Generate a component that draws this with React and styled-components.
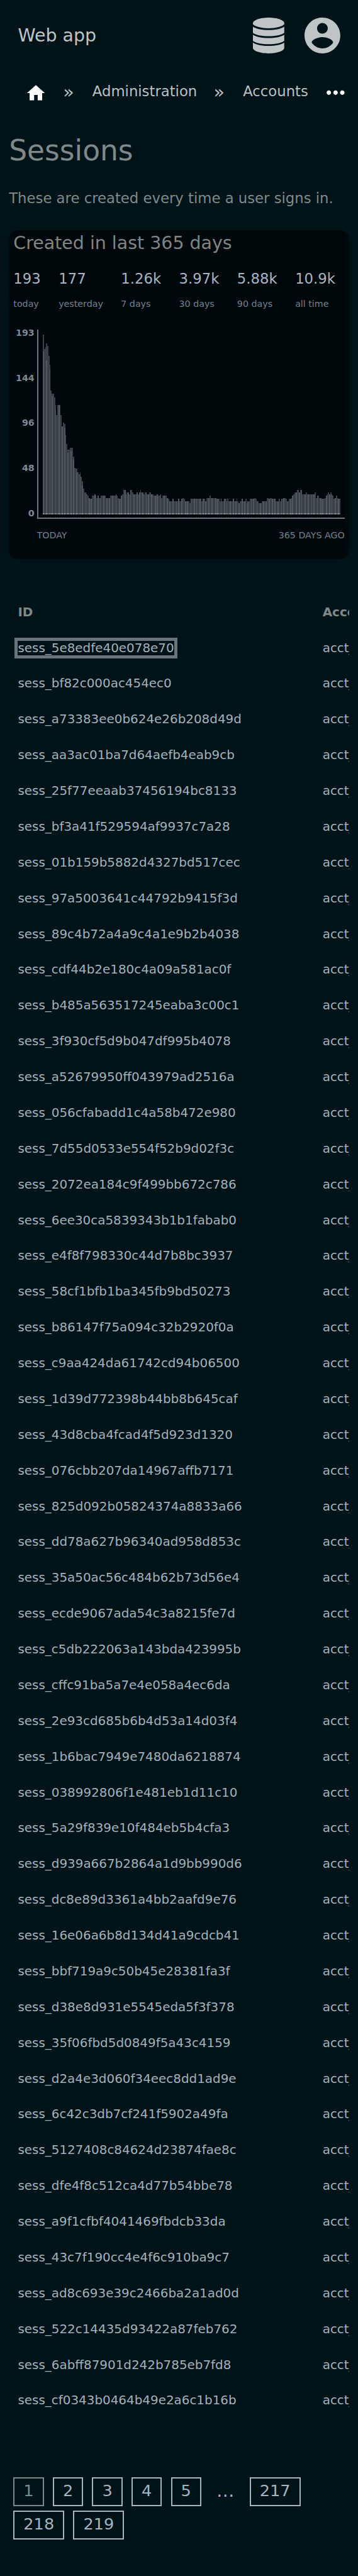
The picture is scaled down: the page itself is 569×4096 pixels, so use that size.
import React from "react";
import styled, { createGlobalStyle } from "styled-components";
import { MdHome, MdMoreHoriz } from "react-icons/md";

/* 1rem = one tenth of the 64rem-wide page */
const GlobalStyle = createGlobalStyle`
  html { font-size: calc(4096px / 460.8); background: #001318; }
  body {
    margin: 0;
    background: #001318;
    color: #bec3c4;
    font-family: "DejaVu Sans", Verdana, sans-serif;
    overflow: hidden;
  }
  *, *::before, *::after { box-sizing: border-box; }
`;

const Page = styled.div`
  display: flex;
  flex-direction: column;
  width: 100%;
  height: 460.8rem;
  overflow: hidden;
`;

const Header = styled.header`
  display: flex;
  align-items: center;
  height: 12.8rem;
  padding: 0 3.2rem;
`;

const Brand = styled.a`
  flex: 1;
  font-size: 3.2rem;
  line-height: 3.8rem;
`;

const HeaderIcon = styled.svg`
  display: block;
  width: ${(p) => p.$width};
  height: 6.4rem;
  margin-left: 3.6rem;
  fill: #bfc5c6;
`;

const Breadcrumbs = styled.nav`
  display: flex;
  align-items: center;
  height: 7.6rem;
  padding-left: 4.48rem;
  color: #fff;
`;

const HomeIcon = styled(MdHome)`
  flex: none;
  width: 3.84rem;
  height: 3.84rem;
  margin-top: 0.2rem;
`;

const MoreIcon = styled(MdMoreHoriz)`
  flex: none;
  width: 4.8rem;
  height: 4.8rem;
  margin-left: 2.5rem;
`;

const Separator = styled.span`
  width: 2rem;
  margin: 0 3.25rem 0 2.95rem;
  padding-bottom: 0.2rem;
  color: #bbbfc0;
  font-size: 3.2rem;
  line-height: 3.8rem;
`;

const Crumb = styled.a`
  padding-bottom: 0.5rem;
  color: #bbbfc0;
  font-size: 2.56rem;
  line-height: 3rem;
`;

const Title = styled.h1`
  margin: 3.6rem 1.6rem 0;
  color: #7f898b;
  font-size: 5.12rem;
  font-weight: 400;
  line-height: 6rem;
`;

const Description = styled.p`
  margin: 4rem 1.6rem 0;
  color: #7f898b;
  font-size: 2.56rem;
  line-height: 3rem;
  white-space: nowrap;
`;

const Card = styled.section`
  height: 58.8rem;
  margin: 4.2rem 1.6rem 0;
  padding: 0.4rem 0.8rem 0;
  border-radius: 1.6rem;
  background: #00080b;
`;

const CardTitle = styled.h2`
  margin: 0;
  color: #7f8485;
  font-size: 3.2rem;
  font-weight: 400;
  line-height: 3.8rem;
`;

const Stats = styled.div`
  display: flex;
  gap: 3.2rem;
  margin-top: 2.95rem;
`;

const Stat = styled.div`
  display: flex;
  flex-direction: column;
  gap: 2.1rem;
`;

const StatValue = styled.span`
  color: #a7b4c1;
  font-size: 2.56rem;
  line-height: 3rem;
`;

const StatLabel = styled.span`
  color: #73808c;
  font-size: 1.6rem;
  line-height: 2rem;
`;

const Chart = styled.div`
  display: flex;
  margin-top: 3.15rem;
`;

const YAxis = styled.div`
  display: flex;
  flex-direction: column;
  justify-content: space-between;
  width: 3.76rem;
  height: 34.3rem;
  color: #7c8995;
  font-size: 1.6rem;
  font-weight: 700;
  line-height: 2rem;
  text-align: right;
`;

const Plot = styled.div`
  width: 55rem;
  height: 33.8rem;
  margin: 0.4rem 0 0 0.44rem;
  padding: 0.8rem 0.8rem 0 0.8rem;
  border: solid #6b7480;
  border-width: 0 0 2px 2px;
`;

const Bars = styled.svg`
  display: block;
  width: 53.2rem;
  height: 32.2rem;
`;

const XAxis = styled.div`
  display: flex;
  justify-content: space-between;
  margin: 1.95rem 0 0 4.2rem;
  color: #73808c;
  font-size: 1.6rem;
  line-height: 2rem;
`;

const Table = styled.div`
  margin: 6.4rem 1.6rem 0;
  overflow: hidden;
`;

const Row = styled.div`
  display: grid;
  grid-template-columns: 54.48rem 20rem;
  align-items: center;
  height: 6.4rem;
  padding-left: 1.6rem;
  color: ${(p) => (p.$head ? "#7f898b" : "#a3b0ba")};
  font-size: 2.24rem;
  font-weight: ${(p) => (p.$head ? 700 : 400)};
  line-height: 2.8rem;
  white-space: nowrap;
`;

const SessionLink = styled.a`
  outline: ${(p) => (p.$focused ? "0.62rem solid #6b737c" : "none")};
`;

const Pagination = styled.nav`
  display: flex;
  flex-wrap: wrap;
  gap: 0.8rem 1.6rem;
  margin: 10.4rem 2.4rem 0;
  width: 56rem;
`;

const PageButton = styled.a`
  display: flex;
  align-items: center;
  justify-content: center;
  width: ${(p) => (p.$wide ? "9.1rem" : "5.44rem")};
  height: 5.2rem;
  padding-bottom: 0.4rem;
  border: ${(p) => (p.$plain ? "0" : "2px solid currentColor")};
  color: ${(p) => (p.$current ? "#7f898b" : "#a7b4bf")};
  font-size: ${(p) => (p.$plain ? "3.2rem" : "2.88rem")};
`;

const stats = [
  ["193", "today"],
  ["177", "yesterday"],
  ["1.26k", "7 days"],
  ["3.97k", "30 days"],
  ["5.88k", "90 days"],
  ["10.9k", "all time"],
];

/* column tops of the chart, "height" or "heightxcount" */
const columns = (
  "161 148 150 153 151 142 134 111 108x2 105 98 89 98x3 89 79 82 81 71 63 58x2 60x3 52 42 41x2 38 36 38 34 30 23 " +
  "20x2 18 17 15 14x2 17x2 18 17 15 17 15x2 17x4 15x4 17x5 18 17 15 14x2 17 18 22x2 18 20x2 18 22x2 20 18x3 20 18 " +
  "20 22 20x2 18 20x2 18x2 20x2 18x2 17x3 18 17x2 18 15 17x4 15 14 12x3 14 12x4 14 12x2 14 15 14 12x4 10 14x10 12 " +
  "14x2 12 15x3 17 15x5 14x3 12 14 12x2 14x2 12 14 12x4 14 12x2 14 12 10 12x2 14 12x2 14 10 12x2 14x4 15 14 12x2 " +
  "10x3 12x4 15x2 14 15x2 14x3 12x3 14 12 14x2 15x2 14 12x2 14x2 15 17 18 20x2 22x2 20 22x2 18x3 20 18x7 20 15 " +
  "17x2 15x2 14x3 15 17 18 20 18 20 18 17 14 15 17 15 14x2"
)
  .split(" ")
  .flatMap((entry) => {
    const [height, count = 1] = entry.split("x").map(Number);
    return Array(count).fill(height);
  });

/* overlap heights where two neighbouring days differ inside one column */
const overlaps = { 0: 146, 3: 138, 6: 130, 8: 106, 11: 94, 16: 87, 19: 78, 22: 55, 25: 57, 27: 49, 30: 38, 33: 36, 35: 26 };

const DAYS = 365;
const WIDTH = 266;
const daysPerColumn = Array(WIDTH).fill(0);
for (let day = 0; day < DAYS; day++) {
  daysPerColumn[Math.min(WIDTH - 1, Math.floor((day * WIDTH) / DAYS + 0.24))]++;
}

const sessions = `5e8edfe40e078e70 bf82c000ac454ec0 a73383ee0b624e26b208d49d aa3ac01ba7d64aefb4eab9cb
25f77eeaab37456194bc8133 bf3a41f529594af9937c7a28 01b159b5882d4327bd517cec 97a5003641c44792b9415f3d
89c4b72a4a9c4a1e9b2b4038 cdf44b2e180c4a09a581ac0f b485a563517245eaba3c00c1 3f930cf5d9b047df995b4078
a52679950ff043979ad2516a 056cfabadd1c4a58b472e980 7d55d0533e554f52b9d02f3c 2072ea184c9f499bb672c786
6ee30ca5839343b1b1fabab0 e4f8f798330c44d7b8bc3937 58cf1bfb1ba345fb9bd50273 b86147f75a094c32b2920f0a
c9aa424da61742cd94b06500 1d39d772398b44bb8b645caf 43d8cba4fcad4f5d923d1320 076cbb207da14967affb7171
825d092b05824374a8833a66 dd78a627b96340ad958d853c 35a50ac56c484b62b73d56e4 ecde9067ada54c3a8215fe7d
c5db222063a143bda423995b cffc91ba5a7e4e058a4ec6da 2e93cd685b6b4d53a14d03f4 1b6bac7949e7480da6218874
038992806f1e481eb1d11c10 5a29f839e10f484eb5b4cfa3 d939a667b2864a1d9bb990d6 dc8e89d3361a4bb2aafd9e76
16e06a6b8d134d41a9cdcb41 bbf719a9c50b45e28381fa3f d38e8d931e5545eda5f3f378 35f06fbd5d0849f5a43c4159
d2a4e3d060f34eec8dd1ad9e 6c42c3db7cf241f5902a49fa 5127408c84624d23874fae8c dfe4f8c512ca4d77b54bbe78
a9f1cfbf4041469fbdcb33da 43c7f190cc4e4f6c910ba9c7 ad8c693e39c2466ba2a1ad0d 522c14435d93422a87feb762
6abff87901d242b785eb7fd8 cf0343b0464b49e2a6c1b16b`.split(/\s+/);

function SessionBars() {
  return (
    <Bars viewBox="0 0 266 161" preserveAspectRatio="none" shapeRendering="crispEdges">
      {columns.slice(0, WIDTH).map((height, i) => {
        const overlap = daysPerColumn[i] > 1 ? overlaps[i] ?? height : 0;
        return (
          <g key={i}>
            <rect x={i} y={161 - height} width="1" height={height} fill="#394046" />
            {overlap > 0 && <rect x={i} y={161 - overlap} width="1" height={overlap} fill="#515960" />}
            <rect x={i} y="160" width="1" height="1" fill={overlap ? "#84959b" : "#59666d"} />
          </g>
        );
      })}
    </Bars>
  );
}

export default function App() {
  return (
    <Page>
      <GlobalStyle />
      <Header>
        <Brand>Web app</Brand>
        <HeaderIcon $width="5.6rem" viewBox="0 0 56 64">
          <path d="M28 0C43 0 56 4.500 56 10V11.500C53 16 41 19 28 19S3 16 0 11.500V10C0 4.500 13 0 28 0Z" />
          <path d="M0 16.400C6 20.200 16 22.300 28 22.300S50 20.200 56 16.400V27.300C51 31 40 33.300 28 33.300S5 31 0 27.300Z" />
          <path d="M0 30.600C6 34.400 16 36.500 28 36.500S50 34.400 56 30.600V41.500C51 45.200 40 47.500 28 47.500S5 45.200 0 41.500Z" />
          <path d="M0 44.800C6 48.600 16 50.700 28 50.700S50 48.600 56 44.800V54C56 59.500 43 64 28 64S0 59.500 0 54Z" />
        </HeaderIcon>
        <HeaderIcon $width="6.4rem" viewBox="2 2 20 20">
          <path d="M12 2C6.480 2 2 6.480 2 12s4.480 10 10 10 10-4.480 10-10S17.520 2 12 2zm0 3c1.660 0 3 1.340 3 3s-1.340 3-3 3-3-1.340-3-3 1.340-3 3-3zm0 14.200c-2.500 0-4.710-1.280-6-3.220.030-1.990 4-3.080 6-3.080 1.990 0 5.970 1.090 6 3.080-1.290 1.940-3.500 3.220-6 3.220z" />
        </HeaderIcon>
      </Header>

      <Breadcrumbs>
        <HomeIcon />
        <Separator>»</Separator>
        <Crumb>Administration</Crumb>
        <Separator>»</Separator>
        <Crumb>Accounts</Crumb>
        <MoreIcon />
      </Breadcrumbs>

      <Title>Sessions</Title>
      <Description>These are created every time a user signs in.</Description>

      <Card>
        <CardTitle>Created in last 365 days</CardTitle>
        <Stats>
          {stats.map(([value, label]) => (
            <Stat key={label}>
              <StatValue>{value}</StatValue>
              <StatLabel>{label}</StatLabel>
            </Stat>
          ))}
        </Stats>
        <Chart>
          <YAxis>
            {[193, 144, 96, 48, 0].map((n) => (
              <span key={n}>{n}</span>
            ))}
          </YAxis>
          <Plot>
            <SessionBars />
          </Plot>
        </Chart>
        <XAxis>
          <span>TODAY</span>
          <span>365 DAYS AGO</span>
        </XAxis>
      </Card>

      <Table>
        <Row $head>
          <span>ID</span>
          <span>Account</span>
        </Row>
        {sessions.map((id, i) => (
          <Row key={id}>
            <span>
              <SessionLink $focused={i === 0}>sess_{id}</SessionLink>
            </span>
            <span>acct_</span>
          </Row>
        ))}
      </Table>

      <Pagination>
        <PageButton $current>1</PageButton>
        {[2, 3, 4, 5].map((n) => (
          <PageButton key={n}>{n}</PageButton>
        ))}
        <PageButton $plain>…</PageButton>
        {[217, 218, 219].map((n) => (
          <PageButton key={n} $wide>
            {n}
          </PageButton>
        ))}
      </Pagination>
    </Page>
  );
}
